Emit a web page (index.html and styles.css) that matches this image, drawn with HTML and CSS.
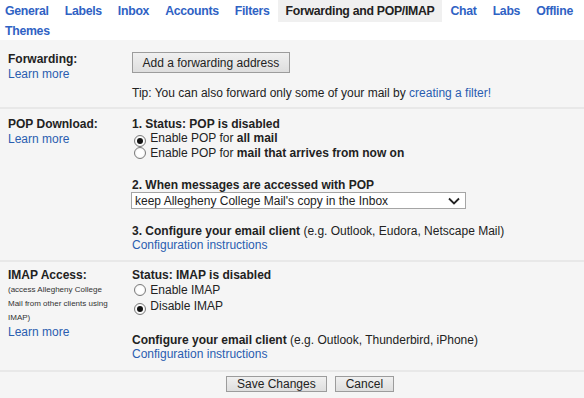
FILE: index.html
```html
<!DOCTYPE html>
<html lang="en">
<head>
    <meta charset="UTF-8">
    <title>Settings - Forwarding and POP/IMAP</title>
    <link rel="stylesheet" href="styles.css">
</head>
<body>
    <div class="tabs">
        <a class="tab" href="#">General</a>
        <a class="tab" href="#">Labels</a>
        <a class="tab" href="#">Inbox</a>
        <a class="tab" href="#">Accounts</a>
        <a class="tab" href="#">Filters</a>
        <span class="tab active">Forwarding and POP/IMAP</span>
        <a class="tab" href="#">Chat</a>
        <a class="tab" href="#">Labs</a>
        <a class="tab" href="#">Offline</a>
        <a class="tab" href="#">Themes</a>
    </div>

    <div class="settings">
        <!-- Forwarding -->
        <div class="row row-forward">
            <div class="label">
                <b>Forwarding:</b>
                <a href="#">Learn more</a>
            </div>
            <div class="value">
                <button class="button">Add a forwarding address</button>
                <p class="tip">Tip: You can also forward only some of your mail by <a href="#">creating a filter!</a></p>
            </div>
        </div>

        <!-- POP -->
        <div class="row row-pop">
            <div class="label">
                <b>POP Download:</b>
                <a href="#">Learn more</a>
            </div>
            <div class="value">
                <div class="heading">1. Status: POP is disabled</div>
                <label class="option"><input type="radio" name="pop" checked> Enable POP for <b>all mail</b></label>
                <label class="option"><input type="radio" name="pop"> Enable POP for <b>mail that arrives from now on</b></label>

                <div class="heading step">2. When messages are accessed with POP</div>
                <div class="select-wrap">
                    <select class="select">
                        <option>keep Allegheny College Mail's copy in the Inbox</option>
                    </select>
                    <svg class="chevron" width="12" height="8" viewBox="0 0 12 8">
                        <path d="M1 1.5 L6 6.5 L11 1.5" fill="none" stroke="#222" stroke-width="1.8"/>
                    </svg>
                </div>

                <div class="heading-line step-3"><b>3. Configure your email client</b> (e.g. Outlook, Eudora, Netscape Mail)</div>
                <a class="link-line" href="#">Configuration instructions</a>
            </div>
        </div>

        <!-- IMAP -->
        <div class="row row-imap">
            <div class="label">
                <b>IMAP Access:</b>
                <span class="note">(access Allegheny College Mail from other clients using IMAP)</span>
                <a class="link-line" href="#">Learn more</a>
            </div>
            <div class="value">
                <div class="heading">Status: IMAP is disabled</div>
                <label class="option tall"><input type="radio" name="imap"> Enable IMAP</label>
                <label class="option tall"><input type="radio" name="imap" checked> Disable IMAP</label>

                <div class="heading-line step-imap"><b>Configure your email client</b> (e.g. Outlook, Thunderbird, iPhone)</div>
                <a class="link-line" href="#">Configuration instructions</a>
            </div>
        </div>

        <div class="actions">
            <button class="button small">Save Changes</button>
            <button class="button small">Cancel</button>
        </div>
    </div>
</body>
</html>
```

FILE: styles.css
```css
body {
    margin: 0;
    font-family: "Liberation Sans", Arial, sans-serif;
    font-size: 12px;
    line-height: 15px;
    color: #222;
    background: #fff;
}
a {
    color: #2a5db0;
    text-decoration: none;
}
.tabs {
    display: flex;
    flex-wrap: wrap;
    column-gap: 16px;
    padding-left: 5px;
}
.tab {
    padding: 4px 0 1px;
    font-size: 12.3px;
    font-weight: bold;
    letter-spacing: -0.3px;
    line-height: 15px;
    color: #2f62c4;
}
.tab.active {
    color: #222;
    background: #f0f0f0;
    padding: 4px 8px 3px;
    margin: 0 -8px -2px;
}
.settings {
    background: #f5f5f5;
}
.row {
    display: grid;
    grid-template-columns: 124px 1fr;
    padding: 0 8px;
    border-bottom: 2px solid #e8e8e8;
}
.label,
.value {
    display: flex;
    flex-direction: column;
    align-items: flex-start;
}
.row-forward {
    padding-top: 12px;
    padding-bottom: 6px;
}
.row-pop {
    padding-top: 8px;
    padding-bottom: 7px;
}
.row-imap {
    padding-top: 6px;
    padding-bottom: 8px;
}
.button {
    font-family: inherit;
    font-size: 12px;
    color: #222;
    height: 21px;
    padding: 0 9.5px;
    border: 1px solid #9c9c9c;
    border-radius: 0;
    background: linear-gradient(#f0f0f0, #dedede);
}
.button.small {
    height: 16px;
    line-height: 12px;
    padding: 0 10px;
}
.tip {
    margin: 13px 0 0;
}
.heading {
    font-weight: bold;
    line-height: 14px;
}
.heading-line {
    line-height: 14px;
}
.option {
    display: block;
    height: 15px;
    white-space: nowrap;
}
.option.tall {
    height: 16px;
    line-height: 16px;
}
.option input {
    appearance: none;
    width: 12px;
    height: 12px;
    margin: 0 1px 0 2px;
    vertical-align: -2px;
    border: 1px solid #7a7a7a;
    border-radius: 50%;
    background: radial-gradient(circle, #fff 45%, #e4e4e4 100%);
    display: inline-grid;
    place-items: center;
}
.option input:checked::after {
    content: "";
    width: 6px;
    height: 6px;
    border-radius: 50%;
    background: #111;
}
.step {
    margin-top: 17px;
}
.step-3 {
    margin-top: 15px;
}
.step-imap {
    margin-top: 19px;
}
.select-wrap {
    position: relative;
    margin-left: -1px;
}
.select {
    appearance: none;
    display: block;
    width: 335px;
    height: 17px;
    padding: 0 3px;
    font-family: inherit;
    font-size: 12px;
    color: #222;
    background: #fff;
    border: 1px solid #a5a5a5;
    border-radius: 0;
}
.chevron {
    position: absolute;
    right: 6px;
    top: 5px;
    pointer-events: none;
}
.note {
    font-size: 8px;
    line-height: 14px;
    width: 110px;
    color: #333;
}
.actions {
    display: flex;
    justify-content: center;
    gap: 8px;
    padding: 4px 0 6px 36px;
}
```
